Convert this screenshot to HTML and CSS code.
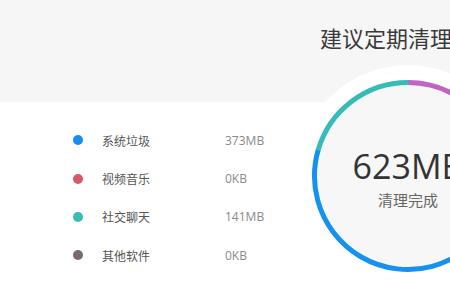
FILE: index.html
```html
<!DOCTYPE html>
<html lang="zh">
<head>
<meta charset="utf-8">
<link rel="stylesheet" href="styles.css">
</head>
<body>
<div class="page">
  <header class="band">
    <h1 class="title">建议定期清理垃圾</h1>
  </header>
  <ul class="list">
    <li class="row"><span class="dot dot-blue"></span><span class="label">系统垃圾</span><span class="value">373MB</span></li>
    <li class="row"><span class="dot dot-red"></span><span class="label">视频音乐</span><span class="value">0KB</span></li>
    <li class="row"><span class="dot dot-teal"></span><span class="label">社交聊天</span><span class="value">141MB</span></li>
    <li class="row"><span class="dot dot-gray"></span><span class="label">其他软件</span><span class="value">0KB</span></li>
  </ul>
  <div class="gauge">
    <svg class="ring" width="230" height="230" viewBox="0 0 230 230">
      <circle cx="115" cy="115" r="111" fill="#ffffff"/>
      <circle cx="115" cy="115" r="91" fill="#f7f7f7"/>
      <circle cx="115" cy="115" r="93.5" fill="none" stroke="#c065c4" stroke-width="5" stroke-dasharray="122.4 600" transform="rotate(-90 115 115)"/>
      <circle cx="115" cy="115" r="93.5" fill="none" stroke="#1592ef" stroke-width="5" stroke-dasharray="344.3 600" transform="rotate(-15 115 115)"/>
      <circle cx="115" cy="115" r="93.5" fill="none" stroke="#36bcb6" stroke-width="5" stroke-dasharray="120.8 600" transform="rotate(196 115 115)"/>
    </svg>
    <div class="gauge-text">
      <div class="amount">623MB</div>
      <div class="status">清理完成</div>
    </div>
  </div>
</div>
</body>
</html>
```

FILE: styles.css
```css
html, body {
  margin: 0;
  padding: 0;
  background: #ffffff;
  overflow: hidden;
}
body {
  width: 450px;
  height: 300px;
  font-family: "Open Sans", "Noto Sans CJK SC", sans-serif;
}
.page {
  position: relative;
  width: 600px;
  height: 300px;
}
.band {
  height: 102px;
  background: #f6f6f6;
  box-sizing: border-box;
  padding: 22px 0 0 320px;
}
.title {
  margin: 0;
  font-family: "Noto Sans CJK SC", sans-serif;
  font-weight: 400;
  font-size: 22px;
  line-height: 30px;
  color: #3a3a3a;
  white-space: nowrap;
}
.list {
  list-style: none;
  margin: 0;
  padding: 19px 0 0 73px;
}
.row {
  display: flex;
  align-items: center;
  height: 38.4px;
}
.dot {
  width: 10px;
  height: 10px;
  border-radius: 50%;
  flex: none;
}
.dot-blue { background: #168ef0; }
.dot-red { background: #d75968; }
.dot-teal { background: #38bdb6; }
.dot-gray { background: #7a6970; }
.label {
  margin-left: 19px;
  width: 123px;
  font-family: "Noto Sans CJK SC", sans-serif;
  font-size: 12px;
  color: #555555;
}
.value {
  font-family: "Open Sans", sans-serif;
  font-size: 12px;
  color: #8a8a8a;
}
.gauge {
  position: absolute;
  left: 293px;
  top: 61px;
  width: 230px;
  height: 230px;
}
.ring {
  display: block;
}
.gauge-text {
  position: absolute;
  inset: 0;
  display: flex;
  flex-direction: column;
  align-items: center;
  justify-content: center;
  padding-top: 2px;
  box-sizing: border-box;
}
.amount {
  font-family: "Open Sans", sans-serif;
  font-size: 34px;
  line-height: 42px;
  color: #333333;
}
.status {
  margin-top: 3px;
  font-family: "Noto Sans CJK SC", sans-serif;
  font-size: 15px;
  line-height: 20px;
  color: #666666;
}
```
